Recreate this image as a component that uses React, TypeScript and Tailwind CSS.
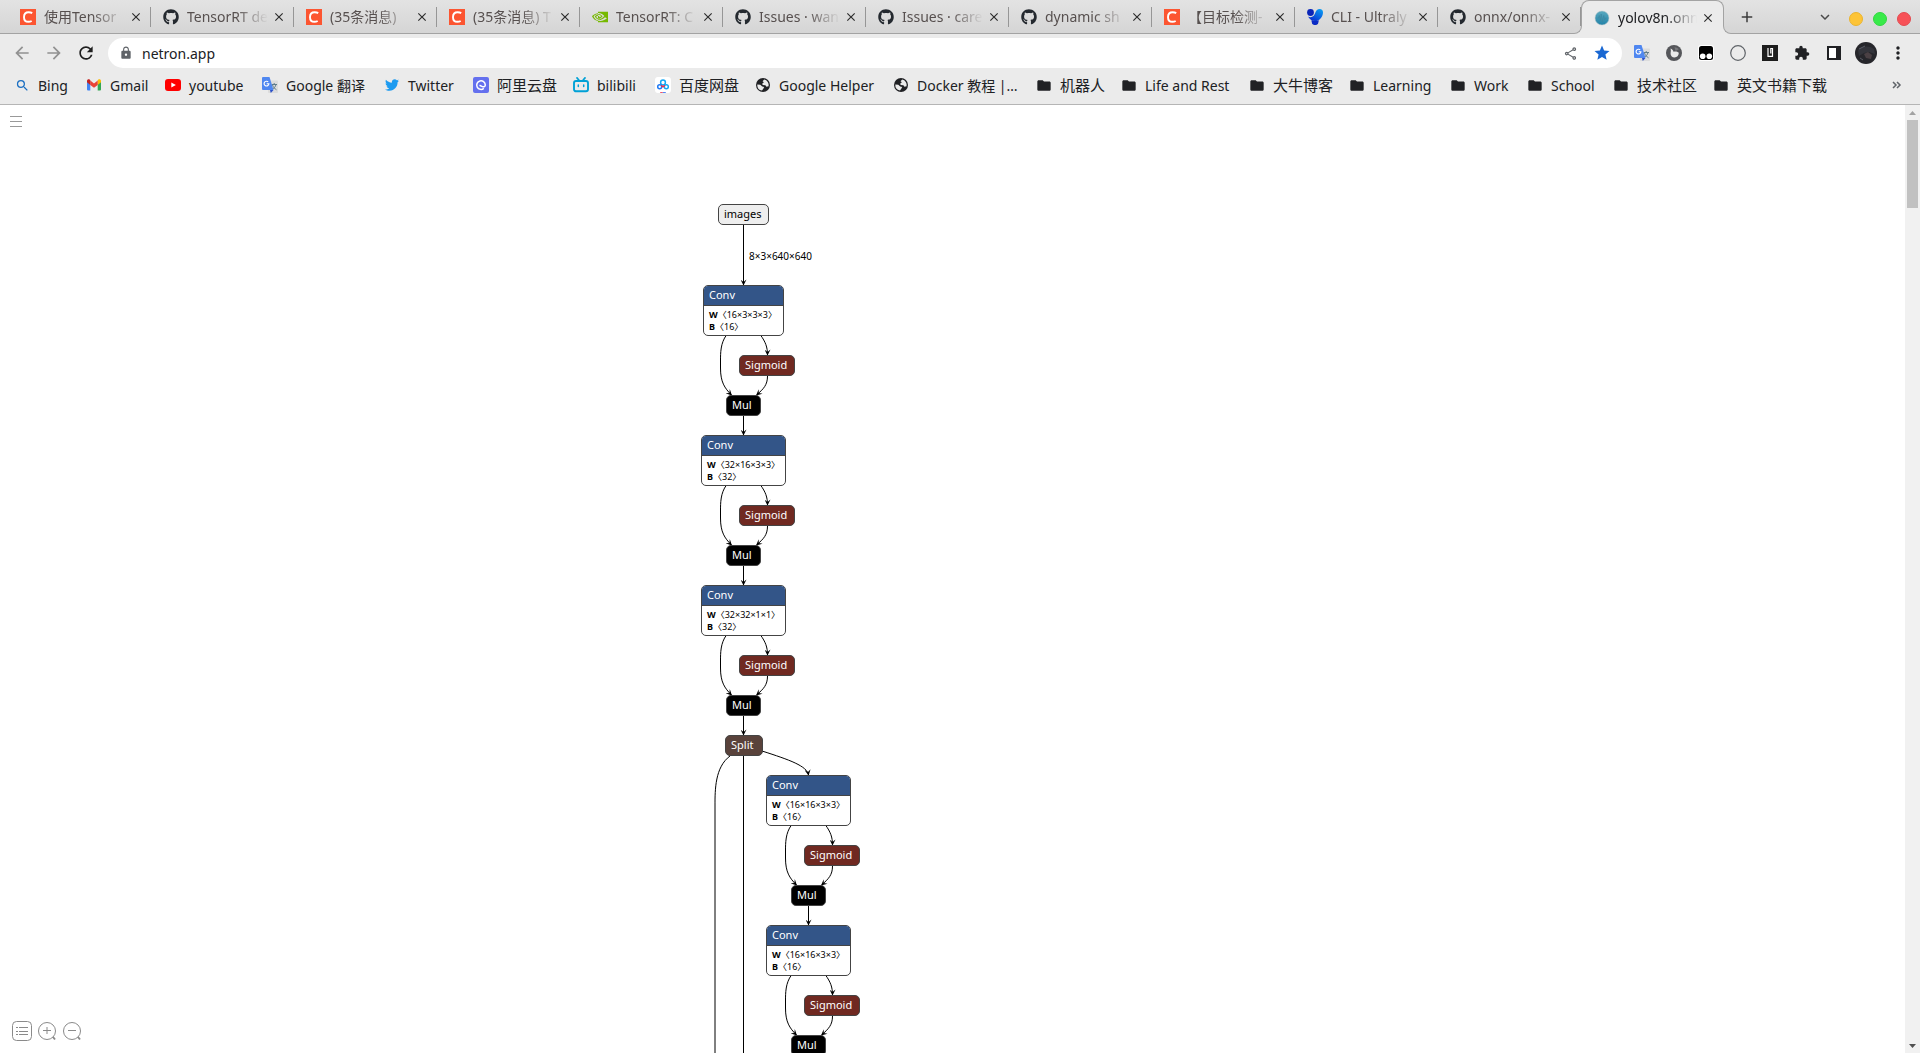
import React from 'react';
import { FaGithub, FaTwitter } from 'react-icons/fa';
import { SiNvidia } from 'react-icons/si';
import {
  MdAdd,
  MdArrowBack,
  MdArrowForward,
  MdClose,
  MdExtension,
  MdFolder,
  MdKeyboardArrowDown,
  MdLock,
  MdMoreVert,
  MdOutlineShare,
  MdRefresh,
  MdSearch,
  MdStar,
} from 'react-icons/md';

/* ---------- icons ---------- */

function CsdnIcon() {
  return (
    <svg viewBox="0 0 16 16" className="size-4">
      <rect width="16" height="16" fill="#fc5531" />
      <path d="M12.2 4.1C11 3.3 9.800 3.200 8.600 3.200 5.600 3.200 4 5.400 4 8.200c0 2.700 1.500 4.600 4.400 4.600 1.200 0 2.200-.2 3.300-.8" fill="none" stroke="#fff" strokeWidth="1.900" />
    </svg>
  );
}

function GithubIcon() {
  return <FaGithub className="size-4 text-[#24292f]" />;
}

function NvidiaIcon() {
  return <SiNvidia className="size-4 text-[#76b900]" />;
}

function UltralyticsIcon() {
  return (
    <svg viewBox="0 0 16 16" className="size-4">
      <defs>
        <linearGradient id="ultra" x1="1" y1="0" x2="0.300" y2="1">
          <stop offset="0" stopColor="#0aa5f5" />
          <stop offset="1" stopColor="#0b2fd0" />
        </linearGradient>
      </defs>
      <path d="M12.600 0A3.500 3.500 0 0 1 16 3.500c0 4-3.300 8.600-8 8.600C4.800 12.100 2.500 10.200 1 7.600c2 1 4.300.6 5.700-.9C8.800 4.500 8.500 0 12.600 0z" fill="url(#ultra)" />
      <circle cx="3.500" cy="3.500" r="3.400" fill="#0a25b8" />
      <path d="M4.600 10.900c2 1.500 5 1.500 7 .2v1.500a3.500 3.500 0 0 1-7 0z" fill="#0b2bc4" />
    </svg>
  );
}

function NetronIcon() {
  return (
    <svg viewBox="0 0 16 16" className="size-4">
      <defs>
        <linearGradient id="netron" x1="0" y1="0" x2="0" y2="1">
          <stop offset="0" stopColor="#5aa9bf" />
          <stop offset="1" stopColor="#2383a8" />
        </linearGradient>
      </defs>
      <circle cx="8" cy="8" r="7" fill="url(#netron)" stroke="#b9c6ca" strokeWidth="0.500" />
      <path d="M3.500 8h1l.8-2.500 1 5L7.200 4l1.200 8L9.700 5.500l1 4.500.8-2h1" fill="none" stroke="#3d86a0" strokeWidth="0.700" />
    </svg>
  );
}

function GmailIcon() {
  return (
    <svg viewBox="0 0 16 16" className="size-4">
      <path d="M1 4.500v8a1 1 0 0 0 1 1h2.300V6.900z" fill="#4285f4" />
      <path d="M11.700 6.900v6.600H14a1 1 0 0 0 1-1v-8z" fill="#34a853" />
      <path d="M11.700 3.600v4.300L15 5.300V4c0-1.500-1.600-2.200-2.700-1.400z" fill="#fbbc04" />
      <path d="M4.300 7.900V3.600L8 6.400l3.700-2.800v4.300L8 10.700z" fill="#ea4335" />
      <path d="M1 4v1.300l3.300 2.600V3.600L3.700 2.600C2.600 1.800 1 2.500 1 4z" fill="#c5221f" />
    </svg>
  );
}

function YoutubeIcon() {
  return (
    <svg viewBox="0 0 16 16" className="size-4">
      <rect y="2" width="16" height="12" rx="3" fill="#f00" />
      <path d="M6.300 5.400v5.200L10.900 8z" fill="#fff" />
    </svg>
  );
}

function TranslateIcon() {
  return (
    <svg viewBox="0 0 16 16" className="size-4">
      <rect x="6" y="3.500" width="10" height="12.500" rx="0.800" fill="#dcdcdc" />
      <path d="M9.500 7.500h5.500M12.200 6v1.500M14 7.500c-.5 2.200-2 4-4 5M10.500 8c.8 2.200 2.200 3.800 4 4.800" fill="none" stroke="#607d8b" strokeWidth="1" />
      <path d="M1 0h6.500l4 13H1a1 1 0 0 1-1-1V1a1 1 0 0 1 1-1z" fill="#4f87f0" />
      <path d="M8 13h3.500L8.800 16z" fill="#2b50c8" />
      <path d="M6.200 4.900A2.400 2.400 0 1 0 6.900 6.700H4.700" fill="none" stroke="#fff" strokeWidth="1.100" />
    </svg>
  );
}

function AliyunIcon() {
  return (
    <svg viewBox="0 0 16 16" className="size-4">
      <rect width="16" height="16" rx="2" fill="#6470ee" />
      <path d="M10.800 11.400A4.300 4.300 0 1 1 12.300 8c0 1.500-1.300 2.300-2.900 1.600L6.500 8.300" fill="none" stroke="#fff" strokeWidth="1.500" />
    </svg>
  );
}

function BilibiliIcon() {
  return (
    <svg viewBox="0 0 16 16" className="size-4" fill="none" stroke="#00a1d6" strokeLinecap="round">
      <rect x="1" y="4" width="14" height="10.300" rx="2" strokeWidth="1.900" />
      <path d="M4 .9l2 2.300M12 .9l-2 2.300" strokeWidth="1.700" />
      <path d="M5.300 8v1.600M10.700 8v1.600" strokeWidth="1.500" />
    </svg>
  );
}

function BaiduIcon() {
  return (
    <svg viewBox="0 0 16 16" className="size-4" fill="none" strokeWidth="1.500">
      <rect width="16" height="16" rx="3" fill="#fff" />
      <circle cx="8" cy="5.500" r="2.400" stroke="#12a8f5" />
      <circle cx="4.700" cy="9.700" r="2" stroke="#1f7af5" />
      <circle cx="11.300" cy="9.700" r="2" stroke="#12a8f5" />
      <path d="M6.200 8.400L8 9.800l1.800-1.400" stroke="#f0304a" />
      <path d="M5.200 15.700h2.600" stroke="#f0304a" strokeWidth="1" />
      <path d="M7.800 15.700h3" stroke="#2a6df5" strokeWidth="1" />
    </svg>
  );
}

function GlobeIcon() {
  return (
    <svg viewBox="0 0 16 16" className="size-4">
      <circle cx="8" cy="8" r="7" fill="#202124" />
      <path d="M9.200 2.600L7.500 4.200l1.400 1-1.600 1.300.3 1.500 2.800.2 1 1.500 2.200-.4A5.700 5.700 0 0 0 9.200 2.600z" fill="#ebebeb" />
      <path d="M2.300 7.500l3 .3 1.900 1.800 2 .3-.9 1.900-1.300 1.800A5.800 5.800 0 0 1 2.300 7.500z" fill="#ebebeb" />
    </svg>
  );
}

function FolderIcon() {
  return <MdFolder className="size-[17px] text-[#202124]" />;
}

function BingIcon() {
  return <MdSearch className="size-[15px] text-[#1b6fc2]" />;
}

function TwitterIcon() {
  return <FaTwitter className="size-[14px] text-[#1d9bf0]" />;
}

function SwirlIcon() {
  return (
    <svg viewBox="0 0 16 16" className="size-4">
      <circle cx="8" cy="8" r="8" fill="#55565a" />
      <path d="M4.500 3.500c1.500.4 2.500 1.600 3 3.300 1.700-.8 3.800-.4 5.300.9-.1 2.800-1.700 4.700-4.300 4.700-2.300 0-3.800-1.400-3.900-3.400-.1-1.800.7-3.500-.1-5.500z" fill="#ebebeb" />
      <path d="M8.500 2.200c1.800 0 3.300.8 4.300 2L9.600 6z" fill="#77787c" />
    </svg>
  );
}

function MonkeyIcon() {
  return (
    <svg viewBox="0 0 16 16" className="size-4">
      <rect width="16" height="16" rx="3" fill="#fff" />
      <rect x="1" y="1" width="14" height="14" rx="2.500" fill="#000" />
      <circle cx="4.700" cy="11.300" r="2.800" fill="#fff" />
      <circle cx="11.300" cy="11.300" r="2.800" fill="#fff" />
    </svg>
  );
}

function RingIcon() {
  return (
    <svg viewBox="0 0 16 16" className="size-4">
      <circle cx="8" cy="8" r="7.300" fill="none" stroke="#5f6368" strokeWidth="1.200" />
    </svg>
  );
}

function BlockIcon() {
  return (
    <svg viewBox="0 0 16 16" className="size-4">
      <rect width="16" height="16" fill="#1c1c1c" />
      <path d="M6 3v8.300h4.500V3.500H8.800v5" fill="none" stroke="#fff" strokeWidth="1.200" />
    </svg>
  );
}

function SidePanelIcon() {
  return (
    <svg viewBox="0 0 14 14" className="size-[14px]">
      <rect x="1" y="1" width="12" height="12" fill="#fff" stroke="#202124" strokeWidth="2" />
      <rect x="9" y="1" width="4" height="12" fill="#202124" />
    </svg>
  );
}

function AvatarIcon() {
  return (
    <svg viewBox="0 0 22 22" className="size-[22px]">
      <circle cx="11" cy="11" r="11" fill="#26262b" />
      <path d="M3 8c4-4 11-5 16-1l1 5-6-2-5 1-5 3z" fill="#33343b" />
      <path d="M9 12l4-2 4 3-1 4-5-1z" fill="#4a4044" />
      <path d="M4 7l6-3M5 16l3 2" stroke="#666874" strokeWidth="0.800" />
    </svg>
  );
}

/* ---------- browser chrome ---------- */

type Icon = () => React.ReactElement;

const tabs: { title: string; icon: Icon; active?: boolean }[] = [
  { title: '使用Tensor', icon: CsdnIcon },
  { title: 'TensorRT de', icon: GithubIcon },
  { title: '(35条消息)', icon: CsdnIcon },
  { title: '(35条消息) T', icon: CsdnIcon },
  { title: 'TensorRT: C', icon: NvidiaIcon },
  { title: 'Issues · wan', icon: GithubIcon },
  { title: 'Issues · care', icon: GithubIcon },
  { title: 'dynamic sh', icon: GithubIcon },
  { title: '【目标检测-', icon: CsdnIcon },
  { title: 'CLI - Ultraly', icon: UltralyticsIcon },
  { title: 'onnx/onnx-', icon: GithubIcon },
  { title: 'yolov8n.onn', icon: NetronIcon, active: true },
];

const bookmarks: { label: string; icon: Icon; width: string }[] = [
  { label: 'Bing', icon: BingIcon, width: 'w-[72px]' },
  { label: 'Gmail', icon: GmailIcon, width: 'w-[79px]' },
  { label: 'youtube', icon: YoutubeIcon, width: 'w-[97px]' },
  { label: 'Google 翻译', icon: TranslateIcon, width: 'w-[122px]' },
  { label: 'Twitter', icon: TwitterIcon, width: 'w-[89px]' },
  { label: '阿里云盘', icon: AliyunIcon, width: 'w-[100px]' },
  { label: 'bilibili', icon: BilibiliIcon, width: 'w-[82px]' },
  { label: '百度网盘', icon: BaiduIcon, width: 'w-[100px]' },
  { label: 'Google Helper', icon: GlobeIcon, width: 'w-[138px]' },
  { label: 'Docker 教程 |…', icon: GlobeIcon, width: 'w-[143px]' },
  { label: '机器人', icon: FolderIcon, width: 'w-[85px]' },
  { label: 'Life and Rest', icon: FolderIcon, width: 'w-[128px]' },
  { label: '大牛博客', icon: FolderIcon, width: 'w-[100px]' },
  { label: 'Learning', icon: FolderIcon, width: 'w-[101px]' },
  { label: 'Work', icon: FolderIcon, width: 'w-[77px]' },
  { label: 'School', icon: FolderIcon, width: 'w-[86px]' },
  { label: '技术社区', icon: FolderIcon, width: 'w-[100px]' },
  { label: '英文书籍下载', icon: FolderIcon, width: 'w-[130px]' },
];

const hasHan = /^[\u3400-\u9fff]/;

function Tab({ title, icon: TabIcon, active }: { title: string; icon: Icon; active?: boolean }) {
  const shape = active
    ? 'relative -mb-px h-[34px] rounded-t-lg border border-b-0 border-[#a3a3a3] bg-[#ebebeb] text-[#202124]'
    : 'h-[33px] text-[#57504f]';
  return (
    <div className={`flex w-[143px] min-w-0 shrink items-center pl-3 ${shape}`}>
      {active && (
        <>
          <span className="absolute bottom-0 -left-2 size-2 bg-[#ebebeb]">
            <span className="block size-2 rounded-br-lg border-r border-b border-[#a3a3a3] bg-[#d7d7d7]" />
          </span>
          <span className="absolute -right-2 bottom-0 size-2 bg-[#ebebeb]">
            <span className="block size-2 rounded-bl-lg border-b border-l border-[#a3a3a3] bg-[#d7d7d7]" />
          </span>
        </>
      )}
      <button type="button" role="tab" aria-selected={!!active} className="flex min-w-0 flex-1 items-center gap-2">
        <span className="shrink-0">
          <TabIcon />
        </span>
        <span className="flex-1 overflow-hidden text-left whitespace-nowrap [mask-image:linear-gradient(to_right,#000_60%,transparent)]">
          {title}
        </span>
      </button>
      <button type="button" aria-label={`Close ${title}`} className="ml-1 flex w-[14px] shrink-0 justify-center">
        <MdClose className="size-[14px] text-[#2c2c2c]" />
      </button>
      <span className={`ml-[7px] h-5 w-px ${active ? '' : 'bg-[#969696]'}`} />
    </div>
  );
}

function TabStrip() {
  return (
    <div className="flex h-[34px] items-start border-b border-[#a3a3a3] bg-linear-to-b from-[#e3e3e3] to-[#d5d5d5] pl-2">
      <div role="tablist" className="flex min-w-0">
        {tabs.map((tab, i) => (
          <Tab key={i} {...tab} />
        ))}
      </div>
      <button type="button" aria-label="New tab" className="ml-[13px] flex h-[33px] w-5 items-center justify-center text-[#3c3c3c]">
        <MdAdd className="size-[18px]" />
      </button>
      <div className="ml-auto flex h-[33px] items-center pr-[9px]">
        <button type="button" aria-label="Search tabs" className="mr-[15px]">
          <MdKeyboardArrowDown className="size-[18px] text-[#4a4a4a]" />
        </button>
        <div className="flex gap-[10px] pt-1">
          <button type="button" aria-label="Minimize" className="size-[14px] rounded-full border border-[#eab42e] bg-[#fdc437]" />
          <button type="button" aria-label="Maximize" className="size-[14px] rounded-full border border-[#30d840] bg-[#38ea49]" />
          <button type="button" aria-label="Close window" className="size-[14px] rounded-full border border-[#e34a50] bg-[#f75157]" />
        </div>
      </div>
    </div>
  );
}

function ToolButton({ label, children }: { label: string; children: React.ReactNode }) {
  return (
    <button type="button" aria-label={label} className="flex h-[30px] w-8 shrink-0 items-center justify-center">
      {children}
    </button>
  );
}

function Toolbar() {
  return (
    <div className="flex items-center pt-1 pr-[6px] pl-[6px]">
      <ToolButton label="Back">
        <MdArrowBack className="size-5 text-[#919191]" />
      </ToolButton>
      <ToolButton label="Forward">
        <MdArrowForward className="size-5 text-[#919191]" />
      </ToolButton>
      <ToolButton label="Reload">
        <MdRefresh className="size-5 text-[#1f1f1f]" />
      </ToolButton>
      <div className="ml-[6px] flex h-[30px] flex-1 items-center rounded-full bg-white pr-1 pl-[11px]">
        <MdLock className="size-[14px] text-[#5f6368]" />
        <input
          aria-label="Address"
          defaultValue="netron.app"
          className="ml-[9px] h-6 min-w-0 flex-1 bg-transparent text-[14px] text-[#202124] outline-none"
        />
        <ToolButton label="Share">
          <MdOutlineShare className="size-[15px] text-[#5f6368]" />
        </ToolButton>
        <ToolButton label="Bookmark this tab">
          <MdStar className="size-[18px] text-[#1967d2]" />
        </ToolButton>
      </div>
      <div className="ml-1 flex items-center">
        <ToolButton label="Translate"><TranslateIcon /></ToolButton>
        <ToolButton label="Swirl"><SwirlIcon /></ToolButton>
        <ToolButton label="Userscripts"><MonkeyIcon /></ToolButton>
        <ToolButton label="Ring"><RingIcon /></ToolButton>
        <ToolButton label="Block"><BlockIcon /></ToolButton>
        <ToolButton label="Extensions"><MdExtension className="size-4 text-[#202124]" /></ToolButton>
        <ToolButton label="Side panel"><SidePanelIcon /></ToolButton>
        <ToolButton label="Profile"><AvatarIcon /></ToolButton>
        <ToolButton label="Menu"><MdMoreVert className="size-5 text-[#202124]" /></ToolButton>
      </div>
    </div>
  );
}

function BookmarksBar() {
  return (
    <nav aria-label="Bookmarks" className="flex h-[37px] items-center border-b border-[#b5b5b5] pb-[2px] pl-[14px] text-[#202124]">
      {bookmarks.map(({ label, icon: BookmarkIcon, width }) => (
        <a key={label} href="#" className={`flex shrink-0 items-center gap-2 whitespace-nowrap ${width}`}>
          <span className="flex w-4 shrink-0 justify-center">
            <BookmarkIcon />
          </span>
          <span className={hasHan.test(label) ? 'text-[15px]' : 'text-[14px]'}>{label}</span>
        </a>
      ))}
      <button type="button" aria-label="More bookmarks" className="mr-[18px] ml-auto">
        <svg viewBox="0 0 10 8" className="h-2 w-[10px]" fill="none" stroke="#5f6368" strokeWidth="1.500">
          <path d="M1 1l3 3-3 3M5 1l3 3-3 3" />
        </svg>
      </button>
    </nav>
  );
}

/* ---------- model graph ---------- */

type OpNode = { name: string; x: number; y: number; w: number; fill: string };
type ConvNode = { x: number; y: number; w: number; weight: string; bias: string };

const MAIN = 743;
const SIDE = 808;

const stages = [
  { cx: MAIN, y: 180, w: 81, weight: '16×3×3×3', bias: '16', next: true },
  { cx: MAIN, y: 330, w: 85, weight: '32×16×3×3', bias: '32', next: true },
  { cx: MAIN, y: 480, w: 85, weight: '32×32×1×1', bias: '32', next: true },
  { cx: SIDE, y: 670, w: 85, weight: '16×16×3×3', bias: '16', next: true },
  { cx: SIDE, y: 820, w: 85, weight: '16×16×3×3', bias: '16', next: false },
];

const convs: ConvNode[] = stages.map((s) => ({
  x: s.cx - Math.floor(s.w / 2),
  y: s.y,
  w: s.w,
  weight: s.weight,
  bias: s.bias,
}));

const ops: OpNode[] = [
  { name: 'images', x: 718, y: 99, w: 51, fill: 'bg-[#eeeeee] text-black' },
  ...stages.flatMap((s) => [
    { name: 'Sigmoid', x: s.cx - 4, y: s.y + 70, w: 56, fill: 'bg-[#702921] text-white' },
    { name: 'Mul', x: s.cx - 17, y: s.y + 110, w: 35, fill: 'bg-black text-white' },
  ]),
  { name: 'Split', x: 725, y: 630, w: 38, fill: 'bg-[#59423b] text-white' },
];

const edges: string[] = [
  'M743.5 120V180',
  ...stages.flatMap(({ cx, y, next }) => {
    const c = cx + 0.5;
    return [
      `M${c - 17} ${y + 50}C${c - 23} ${y + 58} ${c - 23} ${y + 68} ${c - 23} ${y + 76}V${y + 83}C${c - 23} ${y + 97} ${c - 19} ${y + 103} ${c - 12} ${y + 110}`,
      `M${c + 17} ${y + 50}C${c + 22} ${y + 57} ${c + 24} ${y + 62} ${c + 24} ${y + 70}`,
      `M${c + 24} ${y + 91}C${c + 24} ${y + 100} ${c + 20} ${y + 104} ${c + 13} ${y + 110}`,
      ...(next ? [`M${c} ${y + 131}V${y + 150}`] : []),
    ];
  }),
  'M762 646C790 655 807 661 808.5 670',
];

const openEdges = ['M730 651C715 662 715 685 715 700V960', 'M743.5 651V960'];

function Op({ name, x, y, w, fill }: OpNode) {
  return (
    <div
      className={`absolute h-[21px] rounded-[5px] border border-[#444] pl-[5px] text-[11px] leading-[18px] ${fill}`}
      style={{ left: x, top: y, width: w }}
    >
      {name}
    </div>
  );
}

function Conv({ x, y, w, weight, bias }: ConvNode) {
  return (
    <div
      className="absolute h-[51px] overflow-hidden rounded-[5px] border border-[#444] bg-white text-black"
      style={{ left: x, top: y, width: w }}
    >
      <div className="h-5 border-b border-[#444] bg-[#335588] pl-[5px] text-[11px] leading-[18px] text-white">Conv</div>
      <div className="pt-[3px] pl-[5px] text-[9px] leading-3 whitespace-nowrap">
        <div><b>W</b>〈{weight}〉</div>
        <div><b>B</b>〈{bias}〉</div>
      </div>
    </div>
  );
}

function Graph() {
  return (
    <div className="relative min-w-0 flex-1 overflow-hidden bg-white">
      <svg className="absolute inset-0 size-full" fill="none" stroke="#000" aria-hidden="true">
        <defs>
          <marker id="arrow" viewBox="0 0 10 10" refX="9" refY="5" markerWidth="7" markerHeight="6" markerUnits="userSpaceOnUse" orient="auto">
            <path d="M0 0L10 5 0 10 4 5z" fill="#000" stroke="none" />
          </marker>
        </defs>
        {edges.map((d) => (
          <path key={d} d={d} markerEnd="url(#arrow)" />
        ))}
        {openEdges.map((d) => (
          <path key={d} d={d} />
        ))}
      </svg>
      {ops.map((op, i) => (
        <Op key={i} {...op} />
      ))}
      {convs.map((conv, i) => (
        <Conv key={i} {...conv} />
      ))}
      <span className="absolute top-[139px] left-[749px] text-[10px] leading-6 text-black">8×3×640×640</span>

      <button type="button" aria-label="Menu" className="absolute top-[10px] left-[10px] flex w-3 flex-col gap-1 py-px">
        <span className="h-px w-full bg-[#999]" />
        <span className="h-px w-full bg-[#999]" />
        <span className="h-px w-full bg-[#999]" />
      </button>
      <div className="absolute bottom-3 left-3 flex gap-[5px] text-[#8a8a8a]">
        <button type="button" aria-label="Model properties">
          <svg viewBox="0 0 20 20" className="size-5" fill="none" stroke="currentColor">
            <rect x="0.500" y="0.500" width="19" height="19" rx="4" />
            <path d="M4 6.500h2M4 10.500h2M4 13.500h2M7 6.500h9M7 10.500h9M7 13.500h9" />
          </svg>
        </button>
        <button type="button" aria-label="Zoom in">
          <svg viewBox="0 0 20 20" className="size-5" fill="none" stroke="currentColor">
            <circle cx="10" cy="10" r="8.500" />
            <path d="M6 9.500h8M10 6v7" />
            <path d="M16 16l2 2.500" strokeWidth="2" />
          </svg>
        </button>
        <button type="button" aria-label="Zoom out">
          <svg viewBox="0 0 20 20" className="size-5" fill="none" stroke="currentColor">
            <circle cx="10" cy="10" r="8.500" />
            <path d="M6 9.500h8" />
            <path d="M16 16l2 2.500" strokeWidth="2" />
          </svg>
        </button>
      </div>
    </div>
  );
}

function Scrollbar() {
  return (
    <div className="flex w-[15px] flex-col items-center bg-[#f1f1f1]" aria-hidden="true">
      <svg viewBox="0 0 15 15" className="h-[15px] w-[15px]">
        <path d="M4 10h7L7.500 6z" fill="#a3a3a3" />
      </svg>
      <div className="h-[88px] w-[11px] bg-[#c1c1c1]" />
      <svg viewBox="0 0 15 15" className="mt-auto h-[15px] w-[15px]">
        <path d="M4 6h7l-3.500 4z" fill="#505050" />
      </svg>
    </div>
  );
}

export default function App() {
  return (
    <div className="flex h-screen flex-col overflow-hidden bg-[#ebebeb] font-['Noto_Sans','Noto_Sans_CJK_SC',sans-serif] text-[14px]">
      <TabStrip />
      <Toolbar />
      <BookmarksBar />
      <main className="flex min-h-0 flex-1">
        <Graph />
        <Scrollbar />
      </main>
    </div>
  );
}
